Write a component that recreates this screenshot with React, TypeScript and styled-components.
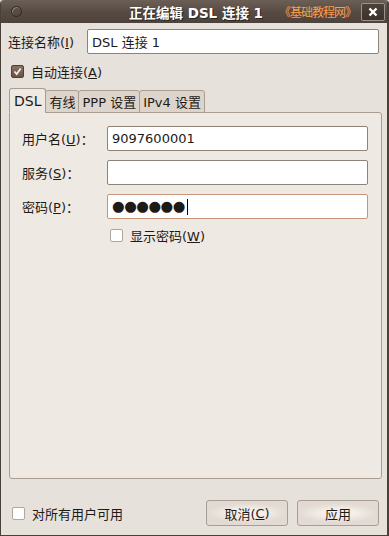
import React from 'react';
import styled, { createGlobalStyle } from 'styled-components';

const Global = createGlobalStyle`
  html, body { margin: 0; padding: 0; background: #e7e1db; }
  body { font-family: "DejaVu Sans", "Noto Sans CJK SC", sans-serif; font-size: 13px; color: #1e1a17; }
`;

const Window = styled.div`
  width: 389px;
  height: 536px;
  box-sizing: border-box;
  display: flex;
  flex-direction: column;
  background: #e7e1db;
  border-left: 1px solid #4a403a;
  border-right: 2px solid #4a403a;
  border-bottom: 1px solid #4a403a;
  border-radius: 4px 4px 0 0;
  overflow: hidden;
`;

const TitleBar = styled.div`
  height: 23px;
  flex: none;
  display: grid;
  grid-template-columns: 1fr auto 1fr;
  align-items: center;
  padding: 0 2px 0 6px;
  background: linear-gradient(#6b5f56, #574b43 50%, #4e433c);
`;

const TitleSide = styled.div<{ $end?: boolean }>`
  display: flex;
  align-items: center;
  justify-content: ${p => (p.$end ? 'flex-end' : 'flex-start')};
`;

const MenuDot = styled.div`
  width: 9px;
  height: 9px;
  border-radius: 50%;
  border: 1px solid #2f2824;
  box-shadow: inset 1px 1px 0 #8b7f76;
  margin-left: 4px;
`;

const Title = styled.div`
  color: #ffffff;
  font-weight: bold;
  font-size: 13.5px;
  text-shadow: 1px 1px 0 #2a231f;
`;

const Watermark = styled.span`
  color: #ff9c4a;
  font-size: 12px;
  letter-spacing: -1px;
  margin-right: 5px;
  font-family: "Noto Sans CJK SC", sans-serif;
`;

const CloseBtn = styled.div`
  width: 22px;
  height: 16px;
  border: 1px solid #9d928a;
  border-radius: 2px;
  background: linear-gradient(#4c423b, #3a322d);
  display: flex;
  align-items: center;
  justify-content: center;
`;

const Body = styled.div`
  flex: 1;
  display: flex;
  flex-direction: column;
  padding: 6px 8px 9px 7px;
`;

const NameRow = styled.div`
  display: flex;
  align-items: center;
  height: 25px;
`;

const NameLabel = styled.label`
  width: 79px;
  flex: none;
`;

const Input = styled.div<{ $focus?: boolean; $w: number }>`
  width: ${p => p.$w}px;
  height: 25px;
  box-sizing: border-box;
  background: #ffffff;
  border: 1px solid ${p => (p.$focus ? '#c7957a' : '#8f8277')};
  border-radius: 2px;
  display: flex;
  align-items: center;
  padding: 0 4px;
  font-size: 13px;
  white-space: pre;
`;

const Dots = styled.span`
  font-size: 14.5px;
  letter-spacing: -0.5px;
  line-height: 1;
`;

const Caret = styled.span`
  display: inline-block;
  width: 1px;
  height: 16px;
  background: #000;
  margin-left: 2px;
`;

const CheckRow = styled.div<{ $ml: number; $mt: number }>`
  display: flex;
  align-items: center;
  gap: 7px;
  margin-left: ${p => p.$ml}px;
  margin-top: ${p => p.$mt}px;
`;

const Box = styled.div<{ $on?: boolean }>`
  width: 11px;
  height: 11px;
  border: 1px solid ${p => (p.$on ? '#4f4036' : '#b1a69c')};
  border-radius: 2px;
  background: ${p => (p.$on ? 'linear-gradient(#8a7262, #6a5446)' : '#ffffff')};
  display: flex;
  align-items: center;
  justify-content: center;
`;

const U = styled.span`
  text-decoration: underline;
`;

const Tabs = styled.div`
  display: flex;
  align-items: flex-end;
  margin-top: 7px;
  margin-left: 1px;
  height: 24px;
  position: relative;
  z-index: 1;
`;

const Tab = styled.div<{ $active?: boolean }>`
  height: ${p => (p.$active ? 25 : 23)}px;
  box-sizing: border-box;
  padding: 0 ${p => (p.$active ? 4 : 3)}px;
  display: flex;
  align-items: center;
  border: 1px solid #a99d92;
  border-bottom: ${p => (p.$active ? '1px solid #efe9e3' : '1px solid #a99d92')};
  border-radius: 3px 3px 0 0;
  background: ${p => (p.$active ? '#efe9e3' : '#ddd4cb')};
  margin-right: -1px;
  margin-bottom: -1px;
  font-size: ${p => (p.$active ? 14 : 13)}px;
`;

const Panel = styled.div`
  height: 367px;
  box-sizing: border-box;
  margin-left: 1px;
  width: 373px;
  border: 1px solid #a99d92;
  border-radius: 0 3px 3px 3px;
  background: #efe9e3;
  padding: 13px 0 0 12px;
  display: flex;
  flex-direction: column;
  gap: 9px;
`;

const FieldRow = styled.div`
  display: flex;
  align-items: center;
`;

const FieldLabel = styled.label`
  width: 85px;
  flex: none;
`;

const Footer = styled.div`
  margin-top: auto;
  display: flex;
  align-items: center;
  padding-left: 4px;
`;

const Spacer = styled.div`
  flex: 1;
`;

const Button = styled.div`
  width: 82px;
  height: 26px;
  box-sizing: border-box;
  border: 1px solid #a89d93;
  border-radius: 3px;
  background: radial-gradient(ellipse 50% 40% at 50% 50%, #f4efea 40%, #e2dad3 100%), #ddd5cd;
  display: flex;
  align-items: center;
  justify-content: center;
  margin-left: 9px;
  font-size: 13px;
`;

const Check = () => (
  <svg width="9" height="9" viewBox="0 0 9 9">
    <path d="M1.5 4.5 L3.7 7 L7.7 1.5" stroke="#f2ede8" strokeWidth="1.8" fill="none" />
  </svg>
);

const App: React.FC = () => {
  return (
    <>
      <Global />
      <Window>
        <TitleBar>
          <TitleSide>
            <MenuDot />
          </TitleSide>
          <Title>正在编辑 DSL 连接 1</Title>
          <TitleSide $end>
            <Watermark>《基础教程网》</Watermark>
            <CloseBtn>
              <svg width="10" height="10" viewBox="0 0 10 10">
                <path d="M1.5 1.5 L8.5 8.5 M8.5 1.5 L1.5 8.5" stroke="#ffffff" strokeWidth="2.4" />
              </svg>
            </CloseBtn>
          </TitleSide>
        </TitleBar>
        <Body>
          <NameRow>
            <NameLabel>连接名称(<U>I</U>)</NameLabel>
            <Input $w={292}>DSL 连接 1</Input>
          </NameRow>
          <CheckRow $ml={3} $mt={8}>
            <Box $on><Check /></Box>
            <span>自动连接(<U>A</U>)</span>
          </CheckRow>
          <Tabs>
            <Tab $active>DSL</Tab>
            <Tab>有线</Tab>
            <Tab>PPP 设置</Tab>
            <Tab>IPv4 设置</Tab>
          </Tabs>
          <Panel>
            <FieldRow>
              <FieldLabel>用户名(<U>U</U>)：</FieldLabel>
              <Input $w={261}>9097600001</Input>
            </FieldRow>
            <FieldRow>
              <FieldLabel>服务(<U>S</U>)：</FieldLabel>
              <Input $w={261} />
            </FieldRow>
            <FieldRow>
              <FieldLabel>密码(<U>P</U>)：</FieldLabel>
              <Input $w={261} $focus>
                <Dots>●●●●●●</Dots>
                <Caret />
              </Input>
            </FieldRow>
            <CheckRow $ml={88} $mt={-2}>
              <Box />
              <span>显示密码(<U>W</U>)</span>
            </CheckRow>
          </Panel>
          <Footer>
            <CheckRow $ml={0} $mt={0}>
              <Box />
              <span>对所有用户可用</span>
            </CheckRow>
            <Spacer />
            <Button>取消(<U>C</U>)</Button>
            <Button>应用</Button>
          </Footer>
        </Body>
      </Window>
    </>
  );
};

export default App;
